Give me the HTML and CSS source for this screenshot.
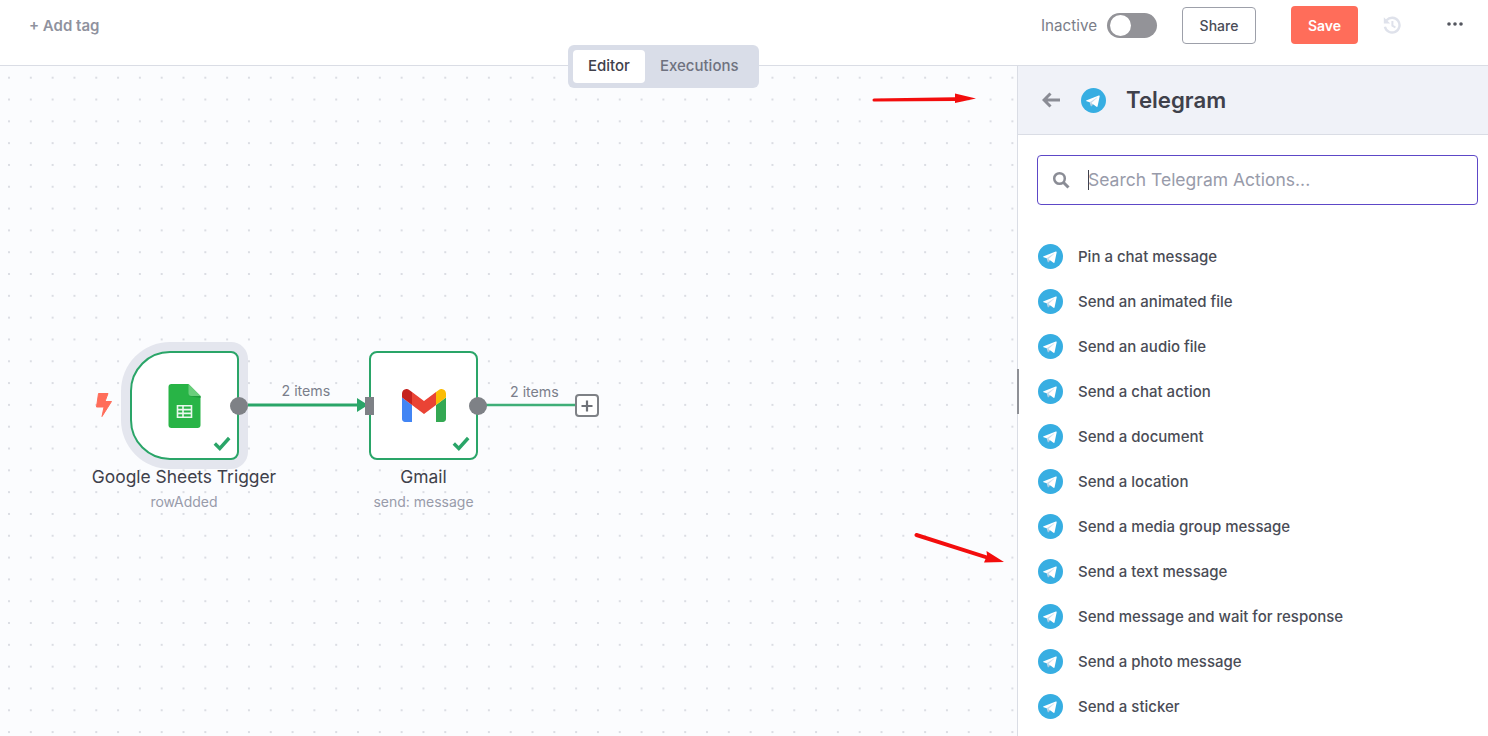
FILE: index.html
```html
<!DOCTYPE html>
<html lang="en">
<head>
<meta charset="utf-8">
<title>Workflow editor</title>
<link rel="stylesheet" href="styles.css">
</head>
<body>
<svg class="sprite" aria-hidden="true">
  <symbol id="tg" viewBox="0 0 240 240">
    <circle cx="120" cy="120" r="120" fill="#37aee2"/>
    <path fill="#c8daea" d="M98 175c-3.888 0-3.227-1.468-4.568-5.17L82 132.207 170 80"/>
    <path fill="#a9c9dd" d="M98 175c3 0 4.325-1.372 6-3l16-15.558-19.958-12.035"/>
    <path fill="#fff" d="M100.04 144.41l48.36 35.729c5.519 3.045 9.501 1.468 10.876-5.123l19.685-92.763c2.015-8.08-3.08-11.746-8.36-9.349l-115.59 44.571c-7.89 3.165-7.843 7.567-1.438 9.528l29.663 9.259 68.673-43.325c3.242-1.966 6.218-.91 3.776 1.258"/>
  </symbol>
</svg>
<header class="topbar">
  <span class="add-tag">+ Add tag</span>
  <div class="actions">
    <span class="status">Inactive</span>
    <span class="toggle"><span class="knob"></span></span>
    <button class="btn-share">Share</button>
    <button class="btn-save">Save</button>
    <svg class="history" viewBox="0 0 18 18" width="18" height="18">
      <path d="M3.6 4.2A7.4 7.4 0 1 1 1.9 10.8" fill="none" stroke="#dfe2eb" stroke-width="2.4"/>
      <path d="M0.8 1.2 7.2 7.4H0.8Z" fill="#dfe2eb"/>
      <path d="M9.4 5v4.6l3 1.9" fill="none" stroke="#dfe2eb" stroke-width="2"/>
    </svg>
    <svg class="more" viewBox="0 0 16 4" width="16" height="4">
      <circle cx="2" cy="2" r="1.800" fill="#54565f"/><circle cx="8" cy="2" r="1.800" fill="#54565f"/><circle cx="14" cy="2" r="1.800" fill="#54565f"/>
    </svg>
  </div>
</header>
<div class="tabs">
  <span class="tab tab-active">Editor</span>
  <span class="tab">Executions</span>
</div>
<main class="workspace">
  <section class="canvas">
    <svg class="overlay" viewBox="0 66 1017 670">
      <path d="M238 405H358" stroke="#2aa568" stroke-width="3" fill="none"/>
      <path d="M357 398 368 405 357 412Z" fill="#2aa568"/>
      <path d="M478 405H576" stroke="#3fae78" stroke-width="2.400" fill="none"/>
      <path d="M874 98.500 955 97.200V93.500L976 98.500 955 103V101L874 101.500A1.500 1.500 0 0 1 874 98.500Z" fill="#f30d0d"/>
      <path d="M917 533 987 555.500 986.500 551 1004 562 984 562.500 985.500 559 916 537A2 2 0 0 1 917 533Z" fill="#f30d0d"/>
    </svg>
    <svg class="bolt" viewBox="0 0 16 24" width="16" height="24">
      <path d="M2.500 0.500H12L9 8.500H15.500L6 23.500 8 14H0.500Z" fill="#ff6d5a" stroke="#ff6d5a" stroke-linejoin="round"/>
    </svg>

    <div class="node node-sheets">
      <div class="box box-trigger">
        <svg viewBox="0 0 32 44" width="33" height="44">
          <path fill="#28b446" d="M3 0H20L32 12V41a3 3 0 0 1-3 3H3a3 3 0 0 1-3-3V3a3 3 0 0 1 3-3Z"/>
          <path fill="#6ace7c" d="M20 0 32 12H23a3 3 0 0 1-3-3Z"/>
          <path fill="#1f9c3d" d="M20 12 32 14V12Z"/>
          <path fill="none" stroke="#eaf8ed" stroke-width="1.600" d="M9 21.800H23V33.200H9ZM9 25.600H23M9 29.400H23M14.500 21.800V33.200"/>
        </svg>
        <svg class="check" viewBox="0 0 18 15" width="18" height="15"><path d="M1.800 7.500 6.800 12.500 16.200 2" fill="none" stroke="#2aa568" stroke-width="3.400"/></svg>
        <span class="port-out"></span>
      </div>
      <div class="name">Google Sheets Trigger</div>
      <div class="sub">rowAdded</div>
    </div>

    <div class="node node-gmail">
      <div class="box">
        <svg viewBox="52 42 88 66" width="44" height="33">
          <path fill="#4285f4" d="M58 108h14V74L52 59v43c0 3.320 2.690 6 6 6"/>
          <path fill="#34a853" d="M120 108h14c3.320 0 6-2.690 6-6V59l-20 15"/>
          <path fill="#fbbc04" d="M120 48v26l20-15v-8c0-7.420-8.470-11.650-14.400-7.200"/>
          <path fill="#ea4335" d="M72 74V48l24 18 24-18v26L96 92"/>
          <path fill="#c5221f" d="M52 51v8l20 15V48l-5.600-4.200c-5.940-4.450-14.400-.22-14.400 7.200"/>
        </svg>
        <svg class="check" viewBox="0 0 18 15" width="18" height="15"><path d="M1.800 7.500 6.800 12.500 16.200 2" fill="none" stroke="#2aa568" stroke-width="3.400"/></svg>
        <span class="port-out"></span>
        <span class="port-in"></span>
      </div>
      <div class="name">Gmail</div>
      <div class="sub">send: message</div>
    </div>

    <span class="edge-label label-a">2 items</span>
    <span class="edge-label label-b">2 items</span>
    <span class="plus">
      <svg viewBox="0 0 12 12" width="12" height="12"><path d="M6 .5v11M.5 6h11" stroke="#6f7278" stroke-width="2.200"/></svg>
    </span>
  </section>

  <aside class="panel">
    <span class="grip"></span>
    <div class="panel-head">
      <svg class="back" viewBox="0 0 18 16" width="18" height="16"><path d="M8.500 1.500 2 8l6.500 6.500M2.500 8H18" fill="none" stroke="#8a8c95" stroke-width="3"/></svg>
      <svg class="tg-head" width="25" height="25"><use href="#tg"/></svg>
      <h1 class="panel-title">Telegram</h1>
    </div>
    <div class="panel-body">
      <div class="search">
        <svg viewBox="0 0 18 18" width="18" height="18"><circle cx="7.500" cy="7.500" r="5.300" fill="none" stroke="#8a8c95" stroke-width="2.500"/><path d="M11.500 11.500 16.500 16.500" stroke="#8a8c95" stroke-width="3"/></svg>
        <span class="caret"></span>
        <span class="placeholder">Search Telegram Actions...</span>
      </div>
      <ul class="list">
        <li class="row"><svg width="25" height="25"><use href="#tg"/></svg>Pin a chat message</li>
        <li class="row"><svg width="25" height="25"><use href="#tg"/></svg>Send an animated file</li>
        <li class="row"><svg width="25" height="25"><use href="#tg"/></svg>Send an audio file</li>
        <li class="row"><svg width="25" height="25"><use href="#tg"/></svg>Send a chat action</li>
        <li class="row"><svg width="25" height="25"><use href="#tg"/></svg>Send a document</li>
        <li class="row"><svg width="25" height="25"><use href="#tg"/></svg>Send a location</li>
        <li class="row"><svg width="25" height="25"><use href="#tg"/></svg>Send a media group message</li>
        <li class="row"><svg width="25" height="25"><use href="#tg"/></svg>Send a text message</li>
        <li class="row"><svg width="25" height="25"><use href="#tg"/></svg>Send message and wait for response</li>
        <li class="row"><svg width="25" height="25"><use href="#tg"/></svg>Send a photo message</li>
        <li class="row"><svg width="25" height="25"><use href="#tg"/></svg>Send a sticker</li>
      </ul>
    </div>
  </aside>
</main>
</body>
</html>
```
FILE: styles.css
```css
* { box-sizing: border-box; }
html, body { margin: 0; height: 100%; overflow: hidden; }
body {
  font-family: Inter, "Liberation Sans", sans-serif;
  color: #3f414b;
  background: #fff;
  display: flex;
  flex-direction: column;
  position: relative;
}
.sprite { display: none; }

.topbar {
  height: 66px;
  flex: none;
  display: flex;
  align-items: flex-start;
  padding-left: 29px;
  border-bottom: 1px solid #dadde5;
  background: #fff;
}
.add-tag { margin-top: 17px; font-size: 15px; line-height: 18px; font-weight: 600; color: #8f929e; }
.actions { margin-left: auto; display: flex; align-items: flex-start; }
.status { margin-top: 16px; font-size: 15.200px; line-height: 20px; color: #7a7d88; }
.toggle {
  margin: 13px 0 0 10px;
  width: 50px; height: 25px;
  border-radius: 13px;
  background: #939398;
  padding: 2px 3px;
}
.knob { display: block; width: 21px; height: 21px; border-radius: 50%; background: #fff; }
.btn-share {
  margin: 7px 0 0 25px;
  width: 74px; height: 37px;
  font: 500 14px Inter, sans-serif;
  color: #4a4c56;
  background: #fff;
  border: 1px solid #9da0aa;
  border-radius: 4px;
}
.btn-save {
  margin: 6px 0 0 35px;
  width: 67px; height: 38px;
  font: 600 14px Inter, sans-serif;
  color: #fff;
  background: #ff6d5a;
  border: 0;
  border-radius: 4px;
}
.history { margin: 16px 0 0 25px; }
.more { margin: 22px 25px 0 46px; }

.tabs {
  position: absolute;
  left: 568px; top: 45px;
  width: 191px; height: 43px;
  padding: 5px;
  display: flex;
  background: #d9dde8;
  border-radius: 6px;
  z-index: 3;
}
.tab { padding: 0 15px; font-size: 15px; font-weight: 500; line-height: 32px; color: #6f7280; }
.tab-active { background: #fff; color: #3f414b; border-radius: 4px; }

.workspace { flex: 1; display: flex; min-height: 0; }
.canvas {
  position: relative;
  flex: 1;
  background-color: #fbfcfe;
  background-image: radial-gradient(circle, #cdd0d8 0.6px, transparent 0.95px);
  background-size: 21.82px 21.82px;
  background-position: -1.9px 0.8px;
}
.overlay { position: absolute; left: 0; top: 0; width: 1017px; height: 670px; }
.bolt { position: absolute; left: 96px; top: 327px; }

.node {
  position: absolute;
  top: 285px;
  width: 240px;
  display: flex;
  flex-direction: column;
  align-items: center;
}
.node-sheets { left: 64px; }
.node-gmail { left: 303.500px; }
.box {
  position: relative;
  width: 109px; height: 109px;
  display: flex;
  align-items: center;
  justify-content: center;
  background: #fff;
  border: 2px solid #2aa568;
  border-radius: 8px;
}
.box-trigger {
  border-radius: 40px 8px 8px 40px;
  box-shadow: 0 0 0 9px #e4e6ee;
}
.check { position: absolute; right: 6px; bottom: 7px; }
.port-out {
  position: absolute;
  right: -11px; top: 44px;
  width: 18px; height: 18px;
  border-radius: 50%;
  background: #7e8186;
}
.port-in {
  position: absolute;
  left: -6px; top: 44px;
  width: 9px; height: 18px;
  background: #7e8186;
}
.name { margin-top: 6px; font-size: 17.400px; line-height: 22px; color: #3f414b; white-space: nowrap; }
.sub { margin-top: 4px; font-size: 14px; line-height: 20px; color: #989baa; white-space: nowrap; }

.edge-label { position: absolute; font-size: 14.200px; line-height: 18px; color: #7a7e8b; }
.label-a { left: 281.500px; top: 316px; }
.label-b { left: 510px; top: 317px; }
.plus {
  position: absolute;
  left: 575px; top: 328px;
  width: 24px; height: 23px;
  display: flex;
  align-items: center;
  justify-content: center;
  background: #fff;
  border: 2px solid #7e8186;
  border-radius: 4px;
}

.panel {
  position: relative;
  width: 471px;
  flex: none;
  border-left: 1px solid #dadde5;
  background: #fff;
}
.grip { position: absolute; left: -1px; top: 303px; width: 2px; height: 45px; background: #8e9096; }
.panel-head {
  height: 69px;
  display: flex;
  align-items: center;
  padding-left: 24px;
  background: #f0f2f8;
  border-bottom: 1px solid #dadde5;
}
.tg-head { margin-left: 21px; }
.panel-title { margin: 0 0 2px 20px; font-size: 22.200px; font-weight: 600; color: #3f414b; }
.panel-body { padding: 20px 10px 0 19px; }
.search {
  height: 50px;
  display: flex;
  align-items: center;
  padding-left: 14px;
  border: 1px solid #5d47c7;
  border-radius: 4px;
}
.caret { width: 1px; height: 20px; margin-left: 18px; background: #3f414b; }
.placeholder { margin: 0 0 2px -1px; font-size: 17.500px; color: #989baa; }
.list { margin: 29px 0 0; padding: 0; list-style: none; }
.row {
  height: 45px;
  display: flex;
  align-items: center;
  gap: 15px;
  padding-left: 1px;
  font-size: 15px;
  font-weight: 500;
  color: #4a4c56;
}
```
